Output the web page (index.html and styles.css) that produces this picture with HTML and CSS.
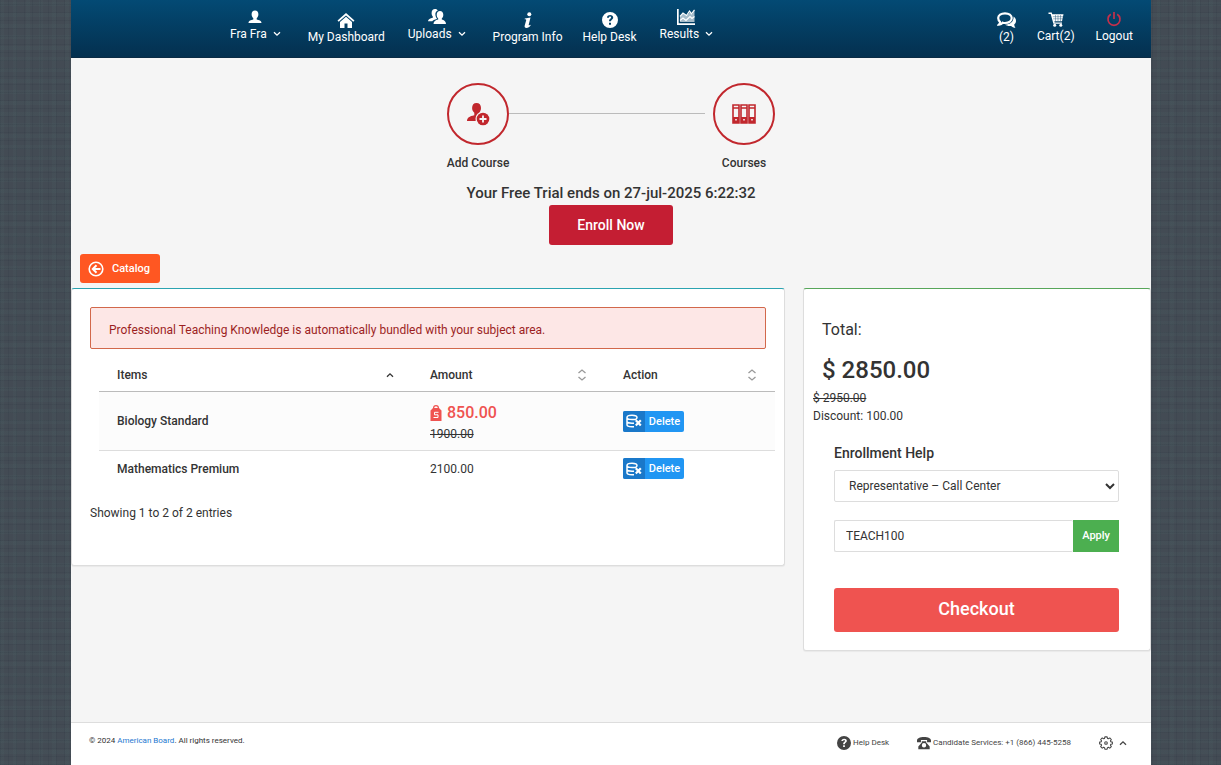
FILE: index.html
```
<!DOCTYPE html>
<html lang="en">
<head>
<meta charset="utf-8">
<meta name="viewport" content="width=device-width, initial-scale=1">
<title>Cart</title>
<link rel="stylesheet" href="styles.css">
</head>
<body>
<svg class="sprite" aria-hidden="true">
  <symbol id="chev-down" viewBox="0 0 8 6"><path d="M1 1.200 4 4.200 7 1.200" fill="none" stroke="currentColor" stroke-width="1.300"/></symbol>
  <symbol id="chev-up" viewBox="0 0 8 6"><path d="M1 4.800 4 1.800 7 4.800" fill="none" stroke="currentColor" stroke-width="1.300"/></symbol>
  <symbol id="sort" viewBox="0 0 10 12"><path d="M1.500 4 5 1 8.500 4M1.500 8 5 11 8.500 8" fill="none" stroke="currentColor" stroke-width="1.300"/></symbol>
  <symbol id="help" viewBox="0 0 16 16"><path fill="currentColor" fill-rule="evenodd" d="M8 0a8 8 0 1 1 0 16A8 8 0 0 1 8 0zM5 5.800h2C7 5 7.400 4.600 8.100 4.600c.6 0 1 .4 1 .9 0 .6-.4.9-.9 1.300C7.400 7.400 7 8 7 9.300h2c0-.8.3-1.100.9-1.600.7-.6 1.300-1.200 1.300-2.300C11.200 3.900 10 3 8.200 3 6.200 3 5 4 5 5.800zM7 10.700h2v2H7z"/></symbol>
  <symbol id="data-x" viewBox="0 0 16 14"><g fill="none" stroke="currentColor" stroke-width="1.500"><path d="M9.500 5.500C10.500 5 11 4.500 11 3.500 11 2 9 1.300 6 1.300S1 2 1 3.500 3 5.500 6 5.500h3.500M1 3.500v7.300c0 1.200 2 2 5 2h2M1 7.300c0 1.200 2 1.900 5 1.900h2"/><path d="m9.800 6.300 5 5.200m0-5.200-5 5.200" stroke-width="2.200"/></g></symbol>
</svg>
<div class="page">
  <header class="topbar">
    <nav class="nav-main" aria-label="Main">
      <button class="nav-item nav-drop" type="button">
        <svg class="nav-icon" viewBox="0 0 16 16"><path fill="currentColor" d="M8 1.500c2.200 0 3.400 1.600 3.400 3.800 0 1.700-.8 3.200-1.700 4v1.200c2.300.6 4.800 1 4.800 3.500h-13c0-2.500 2.500-2.900 4.800-3.500V9.300c-.9-.8-1.700-2.300-1.700-4C4.600 3.100 5.800 1.500 8 1.500z"/></svg>
        <span class="nav-label">Fra Fra <svg class="chev"><use href="#chev-down"/></svg></span>
      </button>
      <a class="nav-item" href="#">
        <svg class="nav-icon wide" viewBox="0 0 18 16"><path fill="currentColor" d="m9 1 8.500 7.500-1.200 1.300L9 3.400 1.700 9.800.5 8.500zM9 4.700l6 5.200V16h-4.500v-4.500h-3V16H3V9.900z"/></svg>
        <span class="nav-label">My Dashboard</span>
      </a>
      <button class="nav-item nav-drop" type="button">
        <svg class="nav-icon wide" viewBox="0 0 18 16"><path fill="currentColor" d="M7 0c1.500 0 2.400.6 2.800 1.600C7.800 2.400 7 4.200 7.500 6.500c.2 1.300.7 2 1.300 2.700v.7C6.500 10.400 5 11 4.300 12.200H0c0-2 2.200-3 4.800-3.500V7.500C4 6.800 3.600 5.500 3.600 4 3.600 1.500 5 0 7 0zM12 2c2 0 3.300 1.500 3.300 3.700 0 1.600-.6 3-1.500 3.700v1.200c2.200.6 4.200 1.700 4.200 4.400H5.500c0-2.700 2-3.800 4.700-4.400V9.400c-.9-.7-1.500-2.100-1.500-3.700C8.700 3.500 10 2 12 2z"/></svg>
        <span class="nav-label">Uploads <svg class="chev"><use href="#chev-down"/></svg></span>
      </button>
      <a class="nav-item" href="#">
        <svg class="nav-icon" viewBox="0 0 16 16"><g fill="currentColor"><circle cx="9.300" cy="2.200" r="2"/><path d="M4.800 6.400 10.500 5.600 8.700 12.700c-.2.800.7.700 1.500 0l.5.600C9.600 15 8 16 6.500 16c-1.600 0-2.200-1-1.800-2.500l1.500-5.300c.2-.8-.3-1-1.600-1z"/></g></svg>
        <span class="nav-label">Program Info</span>
      </a>
      <a class="nav-item" href="#">
        <svg class="nav-icon"><use href="#help"/></svg>
        <span class="nav-label">Help Desk</span>
      </a>
      <button class="nav-item nav-drop" type="button">
        <svg class="nav-icon wide" viewBox="0 0 18 16"><path fill="currentColor" d="M0 0h1.700v14.300H18V16H0z"/><path fill="currentColor" opacity=".65" d="m3 8 3-3.500 3.500 2L13 3l2 2 2.500-3.500V13H3z"/><path fill="none" stroke="currentColor" stroke-width="1.200" d="m3 7.500 3-3.500 3.500 2.500L12.500 2l2 2.800 3-4M3 11.500 6 9l3 2.500 4-4 2 2 2.500-2"/></svg>
        <span class="nav-label">Results <svg class="chev"><use href="#chev-down"/></svg></span>
      </button>
    </nav>
    <nav class="nav-user" aria-label="Account">
      <a class="nav-item" href="#">
        <svg class="nav-icon chat" viewBox="0 0 19 16"><path fill="none" stroke="currentColor" stroke-width="2.200" d="M8 1.300c4 0 6.700 2 6.700 4.800S12 11 8 11c-.8 0-1.500 0-2.200-.3C5 11.800 3.800 12.500 2 12.600c.9-.9 1.200-1.700 1-2.800C1.800 8.900 1.200 7.600 1.200 6.100 1.200 3.300 4 1.300 8 1.300z"/><path fill="currentColor" d="M16.600 4.500C18.200 5.800 19 7 19 8.900c0 1.400-.7 2.500-1.700 3.400-.1 1.300.3 2.400 1.200 3.500-2 0-3.400-.7-4.300-1.800-2.400.4-4.800-.2-6.100-1.400 5 0 8.700-2.800 8.500-8.100z"/></svg>
        <span class="nav-label">(2)</span>
      </a>
      <a class="nav-item raised" href="#">
        <svg class="nav-icon" viewBox="0 0 16 16"><path fill="currentColor" d="M.5 1.500h3.200l.6 1.800h11.200L14 10.200H6.400l.3 1.200h7.300v1.300H5.400L2.700 2.900H.5z"/><circle cx="6.700" cy="14.200" r="1.500" fill="currentColor"/><circle cx="12.800" cy="14.200" r="1.500" fill="currentColor"/><path stroke="#064068" stroke-width=".4" d="M4.800 5.700h10.500M5.200 7.800h9.600M7.500 4v6M10 4v6M12.500 4v6"/></svg>
        <span class="nav-label">Cart(2)</span>
      </a>
      <a class="nav-item raised" href="#">
        <svg class="nav-icon power" viewBox="0 0 16 16"><path fill="none" stroke="currentColor" stroke-width="1.700" d="M4.800 3.200a6 6 0 1 0 6.400 0M8 1v7"/></svg>
        <span class="nav-label">Logout</span>
      </a>
    </nav>
  </header>

  <main class="content">
    <section class="intro">
      <div class="steps">
        <a class="step" href="#">
          <span class="step-circle"><svg class="step-icon" viewBox="0 0 24 24"><path fill="currentColor" d="M10.500 1c2.900 0 4.500 2 4.500 4.900 0 2-.8 3.800-2 4.900-2.600 1.400-4 4.200-3.300 8.200H1c0-3.300 2.500-4.800 7.300-5.800v-2.500C7 9.600 6.100 7.900 6.100 5.900 6.100 3 7.700 1 10.500 1z"/><circle cx="17" cy="17" r="6.300" fill="currentColor"/><path d="M17 13.500v7M13.500 17h7" stroke="#f5f5f5" stroke-width="1.800"/></svg></span>
          <span>Add Course</span>
        </a>
        <span class="step-line"></span>
        <a class="step" href="#">
          <span class="step-circle"><svg class="step-icon" viewBox="0 0 24 24"><g fill="none" stroke="currentColor" stroke-width="1.600"><path d="M1 3h6v18H1zM9 3h6v18H9zM17 3h6v18h-6zM1 6h6M9 6h6M17 6h6"/></g><path fill="currentColor" d="M1 15h6v6H1zM9 15h6v6H9zM17 15h6v6h-6z"/><path fill="#f5f5f5" d="M3.200 17h1.600v1.600H3.200zM11.200 17h1.600v1.600h-1.600zM19.200 17h1.600v1.600h-1.600z"/></svg></span>
          <span>Courses</span>
        </a>
      </div>
      <h1 class="trial">Your Free Trial ends on 27-jul-2025 6:22:32</h1>
      <button class="btn btn-enroll" type="button">Enroll Now</button>
    </section>

    <a class="btn btn-catalog" href="#">
      <svg class="catalog-icon" viewBox="0 0 16 16"><g fill="none" stroke="currentColor"><circle cx="8" cy="8" r="6.800" stroke-width="1.600"/><path d="M12.500 8H5M8.500 4.300 4.800 8l3.700 3.700" stroke-width="2"/></g></svg>
      Catalog
    </a>

    <div class="columns">
      <section class="panel panel-items">
        <p class="alert">Professional Teaching Knowledge is automatically bundled with your subject area.</p>
        <table class="items">
          <thead>
            <tr>
              <th class="col-item" scope="col"><span class="th">Items <svg class="chev"><use href="#chev-up"/></svg></span></th>
              <th class="col-amount" scope="col"><span class="th">Amount <svg class="sort"><use href="#sort"/></svg></span></th>
              <th scope="col"><span class="th">Action <svg class="sort"><use href="#sort"/></svg></span></th>
            </tr>
          </thead>
          <tbody>
            <tr class="odd">
              <td class="name">Biology Standard</td>
              <td class="discounted">
                <span class="sale"><svg class="tag" viewBox="0 0 12 16"><path fill="currentColor" fill-rule="evenodd" d="M6 0a3 3 0 0 1 3 3l2.500 2.500V16H.5V5.500L3 3a3 3 0 0 1 3-3zm0 1.200A1.800 1.800 0 0 0 4.200 3h3.600A1.800 1.800 0 0 0 6 1.200z"/><path d="M8.500 7.300h-4v2.500h3.500v2.700H3.500" fill="none" stroke="#fff" stroke-width="1"/></svg>850.00</span>
                <s class="was">1900.00</s>
              </td>
              <td><button class="btn-delete" type="button"><span class="delete-icon"><svg viewBox="0 0 16 14"><use href="#data-x"/></svg></span><span class="delete-label">Delete</span></button></td>
            </tr>
            <tr>
              <td class="name">Mathematics Premium</td>
              <td>2100.00</td>
              <td><button class="btn-delete" type="button"><span class="delete-icon"><svg viewBox="0 0 16 14"><use href="#data-x"/></svg></span><span class="delete-label">Delete</span></button></td>
            </tr>
          </tbody>
        </table>
        <p class="showing">Showing 1 to 2 of 2 entries</p>
      </section>

      <aside class="panel panel-total">
        <h2 class="total-title">Total:</h2>
        <p class="total-amount">$ 2850.00</p>
        <p class="total-note"><s>$ 2950.00</s></p>
        <p class="total-note">Discount: 100.00</p>
        <form class="checkout">
          <label class="field-label" for="rep">Enrollment Help</label>
          <select class="field" id="rep"><option>Representative – Call Center</option></select>
          <div class="coupon">
            <input class="field" type="text" value="TEACH100" aria-label="Coupon code">
            <button class="btn-apply" type="button">Apply</button>
          </div>
          <button class="btn btn-checkout" type="button">Checkout</button>
        </form>
      </aside>
    </div>
  </main>

  <footer class="footer">
    <p class="copy">© 2024 <a href="#">American Board</a>. All rights reserved.</p>
    <div class="footer-links">
      <a class="footer-link" href="#"><svg class="footer-icon"><use href="#help"/></svg>Help Desk</a>
      <a class="footer-link phone" href="#"><svg class="footer-icon" viewBox="0 0 16 16"><path fill="currentColor" fill-rule="evenodd" d="M8 1c4.800 0 8 1.500 8 4v2h-4.500V4.500h-7V7H0V5c0-2.500 3.200-4 8-4zM5.500 6h5v1.500l4 4.500v3h-13v-3l4-4.500zM8 8a2.500 2.500 0 1 0 0 5 2.500 2.500 0 0 0 0-5z"/></svg>Candidate Services: +1 (866) 445-5258</a>
      <button class="footer-link gear" type="button" aria-label="Settings"><svg class="footer-icon" viewBox="0 0 16 16"><g fill="none" stroke="currentColor" stroke-width="1.200" stroke-linejoin="round"><path d="M6.700 1h2.600l.4 1.800 1 .4 1.600-1 1.800 1.800-1 1.600.4 1 1.800.4v2.100l-1.800.4-.4 1 1 1.600-1.800 1.800-1.600-1-1 .4-.4 1.800H6.700l-.4-1.800-1-.4-1.600 1-1.800-1.800 1-1.600-.4-1L.7 9.100V7l1.800-.4.4-1-1-1.600 1.800-1.800 1.600 1 1-.4z"/><circle cx="8" cy="8" r="1.500"/></g></svg><svg class="chev"><use href="#chev-up"/></svg></button>
    </div>
  </footer>
</div>
</body>
</html>
```
FILE: styles.css
```
*, *::before, *::after { box-sizing: border-box; }

body {
  margin: 0;
  color: #333;
  font: 400 12px/18px Roboto, "Liberation Sans", sans-serif;
  background-color: #434b54;
  background-image:
    repeating-linear-gradient(90deg, rgba(20, 30, 45, .08) 0 1px, transparent 1px 8px),
    repeating-linear-gradient(0deg, rgba(20, 30, 45, .08) 0 1px, transparent 1px 8px),
    repeating-linear-gradient(90deg, rgba(80, 110, 110, .1) 0 4px, transparent 4px 13px),
    repeating-linear-gradient(0deg, rgba(80, 110, 110, .1) 0 4px, transparent 4px 11px);
}

h1, h2, p { margin: 0; }
a { color: inherit; text-decoration: none; }
button, input, select { font: inherit; color: inherit; margin: 0; }
button { border: 0; background: none; padding: 0; cursor: pointer; }
svg { display: block; flex: none; }
.sprite { position: absolute; width: 0; height: 0; }

.page {
  display: flex;
  flex-direction: column;
  min-height: 100vh;
  margin: 0 70px 0 71px;
  background: #f5f5f5;
}

/* Top bar */
.topbar {
  display: flex;
  justify-content: space-between;
  min-height: 58px;
  padding: 0 7px 0 146px;
  color: #fff;
  background: linear-gradient(#034a74, #04304f);
  border-bottom: 1px solid #0a2b44;
}
.nav-main, .nav-user { display: flex; align-items: flex-start; }
.nav-item {
  display: flex;
  flex-direction: column;
  align-items: center;
  padding: 12px 10px 0;
}
.nav-item.nav-drop { padding: 9px 17px 0 13px; }
.nav-user .nav-item { padding-right: 11px; }
.nav-item.raised { padding-top: 11px; }
.nav-icon { width: 16px; height: 16px; }
.nav-icon.wide { width: 18px; }
.nav-icon.chat { width: 19px; }
.nav-icon.power { color: #c5304b; }
.nav-label { display: flex; align-items: center; gap: 6px; white-space: nowrap; }
.chev { width: 8px; height: 6px; }

/* Progress steps */
.content { flex: 1; }
.intro {
  display: flex;
  flex-direction: column;
  align-items: center;
  padding-top: 25px;
}
.steps { display: flex; width: 328px; max-width: 100%; font-weight: 500; }
.step {
  display: flex;
  flex-direction: column;
  align-items: center;
  gap: 9px;
  width: 62px;
  white-space: nowrap;
}
.step-circle {
  display: grid;
  place-items: center;
  width: 62px;
  height: 62px;
  border: 2px solid #c1272d;
  border-radius: 50%;
  color: #c1272d;
}
.step-icon { width: 24px; height: 24px; }
.step-line { flex: 1; height: 1px; margin: 30px 8px 0 0; background: #bbb; }
.trial { margin-top: 10px; font-size: 15px; line-height: 22px; font-weight: 500; }

.btn { border-radius: 3px; color: #fff; }
.btn-enroll {
  height: 40px;
  margin-top: 1px;
  padding: 0 28px;
  background: #c41e33;
  font-size: 14px;
  font-weight: 500;
}
.btn-catalog {
  display: inline-flex;
  align-items: center;
  gap: 8px;
  height: 29px;
  margin: 9px 9px 5px;
  padding: 0 10px 0 8px;
  background: #ff5722;
  font-size: 11px;
  font-weight: 500;
  vertical-align: top;
}
.catalog-icon { width: 16px; height: 16px; }

/* Panels */
.columns {
  display: grid;
  grid-template-columns: 714fr 348fr;
  gap: 18px;
  align-items: start;
}
.panel {
  background: #fff;
  border: 1px solid #ddd;
  border-radius: 3px;
  box-shadow: 0 1px 1px rgba(0, 0, 0, .05);
}
.panel-items { padding: 18px 18px 43px; border-top-color: #2ba3b0; }
.panel-total { padding: 31px 31px 18px 30px; border-top-color: #57a65a; }

.alert {
  padding: 13px 18px 9px;
  border: 1px solid #d2684b;
  border-radius: 2px;
  background: #fde7e6;
  color: #9c1f1f;
}

.items {
  width: 100%;
  margin: 0 0 0 9px;
  border-collapse: collapse;
  table-layout: fixed;
}
.col-item { width: 313px; }
.col-amount { width: 193px; }
.items th { padding: 17px 18px 7px; border-bottom: 1px solid #bbb; font-weight: 500; text-align: left; }
.th { display: flex; justify-content: space-between; align-items: center; }
.sort { width: 10px; height: 12px; color: #999; }
.items td { height: 36px; padding: 0 18px; }
.items .odd td { height: 59px; background: #fcfcfc; border-bottom: 1px solid #ddd; }
.items .odd .discounted { padding-top: 4px; }
.items .name { font-weight: 500; }
.sale { display: flex; align-items: center; gap: 5px; color: #ef5350; font-size: 16px; line-height: 22px; font-weight: 500; }
.tag { width: 12px; height: 16px; }
.was { line-height: 20px; }

.btn-delete {
  display: flex;
  width: 61px;
  height: 21px;
  overflow: hidden;
  border-radius: 2px;
  background: #2196f3;
  color: #fff;
  font-size: 11px;
  font-weight: 500;
  line-height: 21px;
}
.delete-icon { display: grid; place-items: center; width: 22px; height: 21px; background: #1a78c9; }
.delete-icon svg { width: 16px; height: 14px; }
.delete-label { flex: 1; text-align: center; }
.showing { margin-top: 17px; }

/* Order total */
.total-title, .total-amount { margin-left: -12px; }
.total-title { font-size: 16px; line-height: 20px; font-weight: 400; }
.total-amount { margin-top: 15px; font-size: 24px; line-height: 30px; font-weight: 500; }
.total-note { margin-left: -21px; }
.total-amount + .total-note { margin-top: 4px; }
.checkout { display: flex; flex-direction: column; margin-top: 18px; }
.field-label { font-size: 14px; line-height: 20px; font-weight: 500; margin-bottom: 7px; }
.field {
  width: 100%;
  height: 32px;
  padding: 0 11px;
  border: 1px solid #ddd;
  border-radius: 2px;
  background: #fff;
}
select.field { padding: 0 0 0 10px; }
.coupon { display: flex; margin-top: 18px; }
.coupon .field { flex: 1; min-width: 0; border-right: 0; }
.btn-apply { padding: 0 9px; background: #4caf50; color: #fff; font-size: 11px; font-weight: 500; }
.btn-checkout { height: 44px; margin-top: 36px; padding-bottom: 2px; background: #ef5350; font-size: 18px; font-weight: 500; }

/* Footer */
.footer {
  display: flex;
  justify-content: space-between;
  min-height: 43px;
  padding: 9px 24px 12px 18px;
  border-top: 1px solid #ddd;
  background: #fff;
  font-size: 8px;
}
.copy a { color: #1e78d0; }
.footer-links { display: flex; gap: 28px; padding-top: 2px; }
.footer-link { display: flex; align-items: center; gap: 2px; height: 18px; color: #444; }
.footer-link.gear { gap: 6px; }
.footer-icon { width: 14px; height: 14px; }
```
